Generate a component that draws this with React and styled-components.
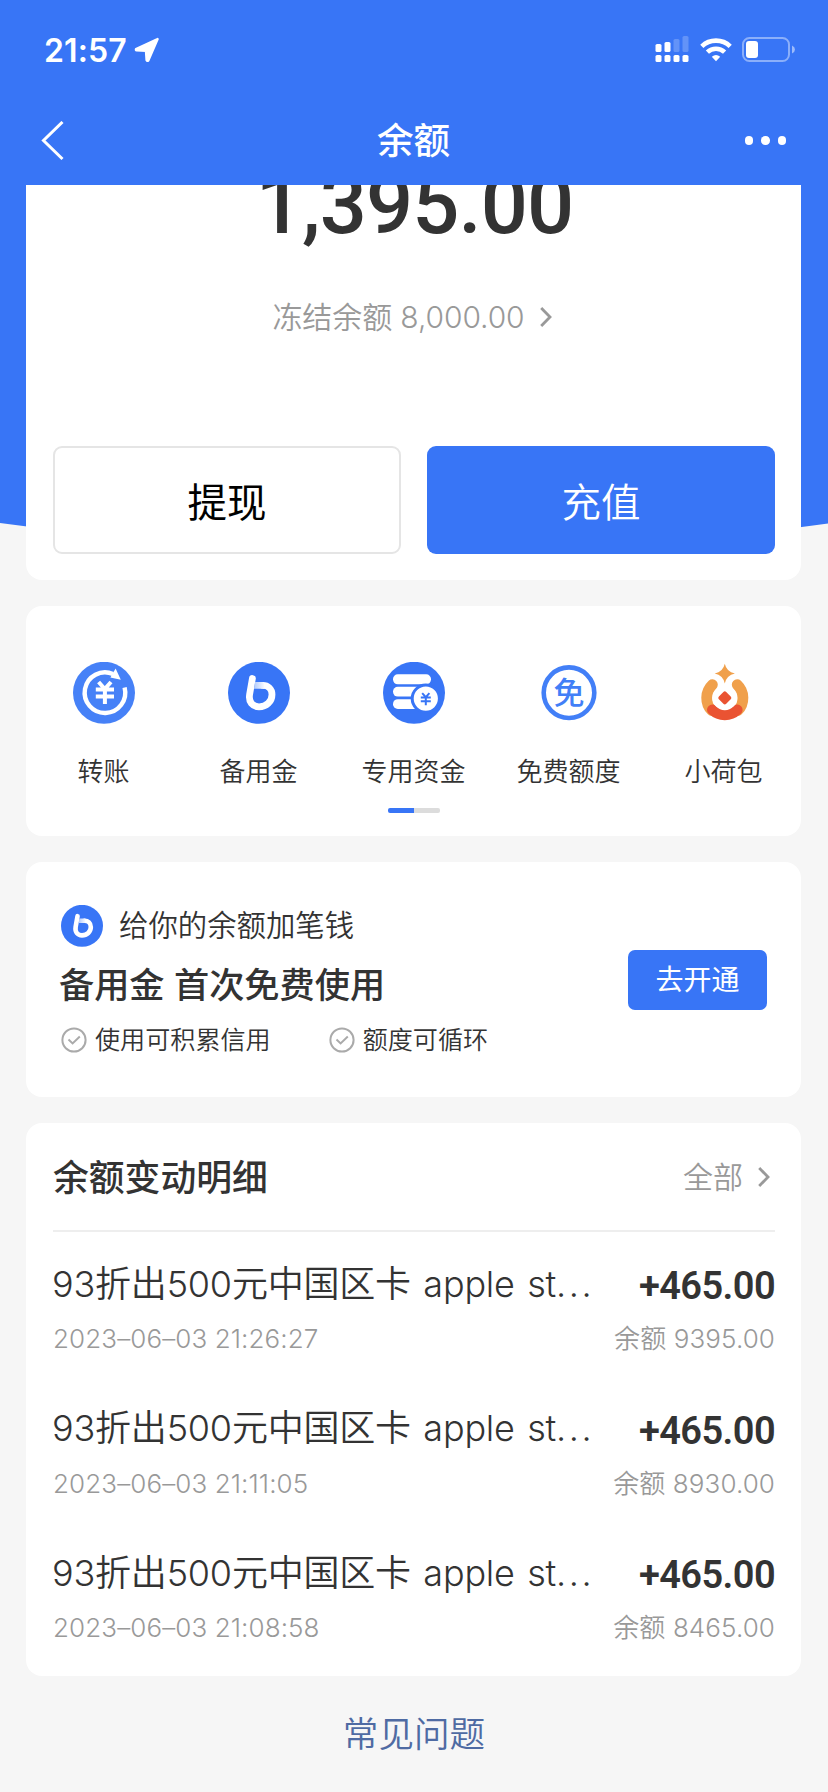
import React from 'react';
import styled, { createGlobalStyle } from 'styled-components';

const blue = '#3875f6';
const dark = '#333333';
const grey = '#999999';

const GlobalStyle = createGlobalStyle`
    * {
        box-sizing: border-box;
    }
    body {
        margin: 0;
        background: #f6f6f6;
        color: ${dark};
        font-family: Inter, "Noto Sans CJK SC", sans-serif;
        font-weight: 350;
    }
    svg {
        display: block;
        flex: none;
    }
    button {
        font-family: inherit;
        padding: 0;
    }
`;

const Page = styled.div`
    width: 828px;
    height: 1792px;
    overflow: hidden;
`;

const Header = styled.header`
    height: 185px;
    background: ${blue};
    color: #fff;
`;

const StatusBar = styled.div`
    height: 99px;
    display: flex;
    align-items: center;
    padding: 0 33px 0 44px;
`;

const Time = styled.span`
    width: 90px;
    padding-top: 1px;
    font-size: 32px;
    font-weight: 600;
    letter-spacing: 0.1px;
`;

const StatusIcons = styled.div`
    display: flex;
    align-items: center;
    gap: 10.5px;
    margin-left: auto;
`;

const NavBar = styled.div`
    height: 83px;
    display: grid;
    grid-template-columns: 100px 1fr 100px;
    align-items: center;
    padding: 0 42px 0 41px;
`;

const NavTitle = styled.h1`
    margin: 0;
    text-align: center;
    font-size: 36.6px;
    font-weight: 500;
    line-height: 50px;
`;

const MoreDots = styled.div`
    display: flex;
    justify-content: flex-end;
    gap: 8px;
`;

const Dot = styled.i`
    width: 8.5px;
    height: 8.5px;
    border-radius: 50%;
    background: #fff;
`;

const BalanceArea = styled.section`
    position: relative;
    padding: 0 27px 0 26px;

    &::before {
        content: '';
        position: absolute;
        inset: 0;
        background: ${blue};
        clip-path: circle(3000px at 50.2% -2633px);
    }
`;

const BalanceCard = styled.div`
    position: relative;
    height: 395px;
    padding: 0 26px 26px 27px;
    background: #fff;
    border-radius: 0 0 16px 16px;
    display: flex;
    flex-direction: column;
    align-items: center;
`;

/* the amount is scrolled halfway under the header */
const AmountClip = styled.div`
    height: 66px;
    width: 100%;
    overflow: hidden;
    display: flex;
    align-items: flex-end;
    justify-content: center;
`;

const Amount = styled.div`
    font-family: Roboto, sans-serif;
    font-size: 83px;
    font-weight: 550;
    line-height: 87px;
    height: 90px;
    flex: none;
    letter-spacing: -0.9px;
    margin-right: -1px;
`;

const Frozen = styled.div`
    margin: 46px 4px 0 0;
    height: 40px;
    display: flex;
    align-items: center;
    font-size: 30px;
    line-height: 40px;
    color: ${grey};
    letter-spacing: -0.1px;

    svg {
        margin-left: 15px;
    }
`;

const Actions = styled.div`
    width: 100%;
    display: grid;
    grid-template-columns: 1fr 1fr;
    gap: 26px;
    margin-top: auto;
`;

const ActionButton = styled.button`
    height: 108px;
    padding-bottom: 2px;
    border-radius: 9px;
    border: ${(p) => (p.$primary ? 'none' : '2px solid #e5e5e5')};
    background: ${(p) => (p.$primary ? blue : '#fff')};
    color: ${(p) => (p.$primary ? '#fff' : '#000')};
    font-size: 39.5px;
    font-weight: ${(p) => (p.$primary ? 350 : 400)};
`;

const Card = styled.section`
    margin: 26px 27px 0 26px;
    background: #fff;
    border-radius: 16px;
`;

const Services = styled(Card)`
    height: 230px;
    padding-top: 56px;
`;

const ServiceGrid = styled.div`
    display: grid;
    grid-template-columns: repeat(5, 155px);
`;

const Service = styled.div`
    display: flex;
    flex-direction: column;
    align-items: center;
    font-size: 26px;
    line-height: 36px;

    svg {
        margin-bottom: 30px;
    }
`;

const Indicator = styled.div`
    width: 52px;
    height: 5px;
    margin: 18px auto 0;
    border-radius: 2px;
    background: linear-gradient(90deg, ${blue} 50%, #dcdcdc 50%);
`;

const Promo = styled(Card)`
    height: 235px;
    padding: 0 34px 0 35px;
    display: flex;
    align-items: center;
    justify-content: space-between;
`;

const PromoText = styled.div`
    display: flex;
    flex-direction: column;
    padding-top: 2px;
`;

const PromoLead = styled.div`
    display: flex;
    align-items: center;
    gap: 16px;
    height: 42px;
    font-size: 29.4px;
`;

const Lift = styled.span`
    margin-top: -6px;
`;

const PromoTitle = styled.div`
    margin: 13px 0 0 -2px;
    line-height: 50px;
    font-size: 35.2px;
    font-weight: 500;
`;

const Perks = styled.div`
    display: flex;
    gap: 58px;
    margin-top: 13px;
`;

const Perk = styled.div`
    display: flex;
    align-items: center;
    gap: 8px;
    font-size: 25.1px;
    line-height: 34px;
`;

const OpenButton = styled.button`
    width: 139px;
    height: 60px;
    padding-bottom: 3px;
    border: none;
    border-radius: 7px;
    background: ${blue};
    color: #fff;
    font-size: 28px;
    font-weight: 400;
`;

const History = styled(Card)`
    height: 553px;
    padding: 0 26px 0 27px;
`;

const HistoryHead = styled.div`
    height: 109px;
    border-bottom: 2px solid #eeeeee;
    display: flex;
    align-items: center;
    justify-content: space-between;
`;

const HistoryTitle = styled.h2`
    margin: 0;
    padding-top: 3px;
    font-size: 35.8px;
    font-weight: 500;
    line-height: 50px;
`;

const All = styled.div`
    display: flex;
    align-items: center;
    gap: 15px;
    padding-right: 5px;
    font-size: 30px;
    line-height: 40px;
    color: ${grey};
`;

const Record = styled.div`
    height: 144.5px;
    padding-top: 24px;
`;

const Line = styled.div`
    display: flex;
    justify-content: space-between;
    align-items: center;
`;

const RecordTitle = styled.div`
    margin-left: -1px;
    font-size: 36px;
    line-height: 50px;
    letter-spacing: -0.2px;
    word-spacing: 2.5px;
    white-space: nowrap;
`;

const Ellipsis = styled.span`
    letter-spacing: 2.6px;
`;

const RecordAmount = styled.div`
    font-family: Roboto, sans-serif;
    font-size: 38px;
    font-weight: 600;
    line-height: 50px;
    padding-top: 5px;
    letter-spacing: -0.6px;
`;

const RecordMeta = styled(Line)`
    margin-top: 10px;
    font-size: 26px;
    line-height: 36px;
    letter-spacing: 0.1px;
    color: ${grey};
`;

const Faq = styled.a`
    display: block;
    margin-top: 34px;
    text-align: center;
    font-size: 35.6px;
    line-height: 50px;
    color: #4f6ba3;
`;

const Chevron = () => (
    <svg width="12" height="20" viewBox="0 0 12 20" fill="none" stroke="#999" strokeWidth="2.8">
        <path d="M1.2 1L10 10L1.2 19" />
    </svg>
);

const LocationArrow = () => (
    <svg width="26" height="26" viewBox="0 0 26 26" fill="#fff" stroke="#fff" strokeWidth="2.4" strokeLinejoin="round">
        <path d="M23.6 2L2 12.2Q1.6 13.2 2.6 13.4L12 13.9L12.6 23.2Q13.3 24.4 14.4 23.3Z" />
    </svg>
);

const Signal = () => (
    <svg width="34" height="27" viewBox="0 0 34 27" fill="#fff">
        <rect x="0.5" y="8" width="6" height="8" rx="1.6" />
        <rect x="9.5" y="6" width="6" height="10" rx="1.6" />
        <rect x="18.5" y="3" width="6" height="13" rx="1.6" opacity=".22" />
        <rect x="27.5" y="0" width="6" height="16" rx="1.6" opacity=".22" />
        {[0.5, 9.5, 18.5, 27.5].map((x) => (
            <rect key={x} x={x} y="19" width="6" height="7" rx="1.6" />
        ))}
    </svg>
);

const Wifi = () => (
    <svg width="32" height="25" viewBox="0 0 32 25" fill="none" stroke="#fff" strokeWidth="4.6">
        <path d="M1.8 9.3A20.5 20.5 0 0 1 30.2 9.3" />
        <path d="M7.4 15.2A12.5 12.5 0 0 1 24.6 15.2" />
        <path d="M11.8 19.8Q16 16 20.2 19.8L16 24.3Z" fill="#fff" stroke="none" />
    </svg>
);

const Battery = () => (
    <svg width="53" height="25" viewBox="0 0 53 25" fill="none">
        <rect x="1" y="1" width="46" height="23" rx="6.5" stroke="#fff" strokeWidth="2" opacity=".42" />
        <rect x="4" y="4" width="12" height="17" rx="3" fill="#fff" />
        <path d="M50 8.4Q53 10 53 12.4T50 16.6Z" fill="#fff" opacity=".5" />
    </svg>
);

const TransferIcon = () => (
    <svg width="62" height="62" viewBox="0 0 62 62" fill="none" stroke="#fff">
        <circle cx="31" cy="30.8" r="31" fill="#4681f7" stroke="none" />
        <path d="M51.6 25.5A20.3 20.3 0 1 1 40 12" strokeWidth="4.4" />
        <path d="M42.6 6.5L47.8 17.8L37.4 15.6Z" fill="#fff" stroke="none" />
        <path d="M25.6 20L31.8 27L38 20M22.8 27.6H41M22.8 34.4H41M31.9 26V42" strokeWidth="4" />
    </svg>
);

const ReserveIcon = ({ size = 62 }) => (
    <svg width={size} height={size} viewBox="0 0 62 62" fill="none" strokeLinecap="round">
        <defs>
            <linearGradient id="fold" gradientUnits="userSpaceOnUse" x1="25" y1="0" x2="37" y2="0">
                <stop offset="0" stopColor="#a9c5fc" />
                <stop offset="1" stopColor="#fff" />
            </linearGradient>
        </defs>
        <circle cx="31" cy="30.8" r="31" fill={blue} />
        <path
            d="M24.4 16.5L21.6 32.5C20.4 40 24.5 44.8 31 44.8C38.4 44.8 44 39.6 44 32.4C44 27 40 23.3 34.8 23.3"
            stroke="#fff"
            strokeWidth="6.8"
            strokeLinecap="round"
        />
        <path d="M27 19.9H36V26.7H26Z" fill="url(#fold)" />
    </svg>
);

const FundsIcon = () => (
    <svg width="62" height="62" viewBox="0 0 62 62">
        <circle cx="31" cy="30.8" r="31" fill={blue} />
        <g fill="#fff">
            <rect x="10" y="12.3" width="38" height="10" rx="4.8" />
            <rect x="10" y="24.8" width="32" height="9.8" rx="4.8" />
            <rect x="10" y="37.2" width="32" height="9.8" rx="4.8" />
        </g>
        <circle cx="42.8" cy="36.6" r="13.6" fill="#fff" stroke={blue} strokeWidth="3" />
        <path d="M39.2 31.2L42.8 35.2L46.4 31.2M37.8 35.6H47.8M37.8 39.2H47.8M42.8 35V43.2" fill="none" stroke={blue} strokeWidth="2" />
    </svg>
);

const FreeText = styled.text`
    font-family: "Noto Sans CJK SC", sans-serif;
    font-size: 31px;
    font-weight: 500;
    fill: #427ff7;
`;

const FreeIcon = () => (
    <svg width="62" height="62" viewBox="0 0 62 62">
        <circle cx="31" cy="30.7" r="25.3" fill="none" stroke="#427ff7" strokeWidth="4.6" />
        <FreeText x="31" y="41.5" textAnchor="middle">免</FreeText>
    </svg>
);

const PurseIcon = () => (
    <svg width="62" height="62" viewBox="0 0 62 62" fill="none" strokeLinecap="round" strokeWidth="10.8">
        <path d="M19.4 22.7A18.2 18.2 0 0 0 18.8 48.6M44.2 22.7A18.2 18.2 0 0 1 44.8 48.6" stroke="#f0a04b" />
        <path d="M19.4 47.9A18.2 18.2 0 0 0 44.2 47.9" stroke="#ea5332" />
        <circle cx="31.8" cy="35.9" r="12.3" fill="#fff" />
        <path d="M31.8 1.8Q33.5 9.9 41.9 11.4Q33.5 13.2 31.8 21.4Q30.1 13.2 21.7 11.4Q30.1 9.9 31.8 1.8Z" fill="#f0a04b" />
        <path d="M31.8 31.4L36.3 35.9L31.8 40.4L27.3 35.9Z" fill="#ea5332" stroke="#ea5332" strokeWidth="4" strokeLinejoin="round" />
    </svg>
);

const CheckIcon = () => (
    <svg width="26" height="26" viewBox="0 0 26 26" fill="none" stroke="#aaa" strokeWidth="2">
        <circle cx="13" cy="13" r="11.6" />
        <path d="M7.5 12.6L11.6 16.4L18.8 9.6" />
    </svg>
);

const services = [
    { label: '转账', Icon: TransferIcon },
    { label: '备用金', Icon: ReserveIcon },
    { label: '专用资金', Icon: FundsIcon },
    { label: '免费额度', Icon: FreeIcon },
    { label: '小荷包', Icon: PurseIcon },
];

const records = [
    { time: '2023–06–03 21:26:27', balance: '9395.00' },
    { time: '2023–06–03 21:11:05', balance: '8930.00' },
    { time: '2023–06–03 21:08:58', balance: '8465.00' },
];

const App = () => (
    <Page>
        <GlobalStyle />
        <Header>
            <StatusBar>
                <Time>21:57</Time>
                <LocationArrow />
                <StatusIcons>
                    <Signal />
                    <Wifi />
                    <Battery />
                </StatusIcons>
            </StatusBar>
            <NavBar>
                <svg width="24" height="40" viewBox="0 0 24 40" fill="none" stroke="#fff" strokeWidth="3">
                    <path d="M21.5 1L2.5 19.5L21.5 38" />
                </svg>
                <NavTitle>余额</NavTitle>
                <MoreDots><Dot /><Dot /><Dot /></MoreDots>
            </NavBar>
        </Header>

        <BalanceArea>
            <BalanceCard>
                <AmountClip><Amount>1,395.00</Amount></AmountClip>
                <Frozen>冻结余额 8,000.00<Chevron /></Frozen>
                <Actions>
                    <ActionButton>提现</ActionButton>
                    <ActionButton $primary>充值</ActionButton>
                </Actions>
            </BalanceCard>
        </BalanceArea>

        <Services>
            <ServiceGrid>
                {services.map(({ label, Icon }) => (
                    <Service key={label}><Icon />{label}</Service>
                ))}
            </ServiceGrid>
            <Indicator />
        </Services>

        <Promo>
            <PromoText>
                <PromoLead><ReserveIcon size={42} /><Lift>给你的余额加笔钱</Lift></PromoLead>
                <PromoTitle>备用金 首次免费使用</PromoTitle>
                <Perks>
                    <Perk><CheckIcon />使用可积累信用</Perk>
                    <Perk><CheckIcon />额度可循环</Perk>
                </Perks>
            </PromoText>
            <OpenButton>去开通</OpenButton>
        </Promo>

        <History>
            <HistoryHead>
                <HistoryTitle>余额变动明细</HistoryTitle>
                <All>全部<Chevron /></All>
            </HistoryHead>
            {records.map(({ time, balance }) => (
                <Record key={time}>
                    <Line>
                        <RecordTitle>93折出500元中国区卡 apple st<Ellipsis>...</Ellipsis></RecordTitle>
                        <RecordAmount>+465.00</RecordAmount>
                    </Line>
                    <RecordMeta>
                        <span>{time}</span>
                        <span>余额 {balance}</span>
                    </RecordMeta>
                </Record>
            ))}
        </History>

        <Faq>常见问题</Faq>
    </Page>
);

export default App;
